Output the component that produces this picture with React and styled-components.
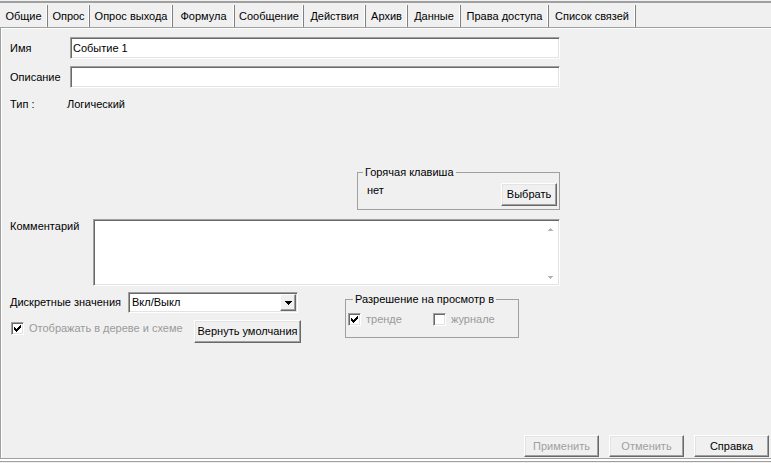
import React from 'react';
import styled, { createGlobalStyle } from 'styled-components';

const TABS = [
  { label: 'Общие', width: 48 },
  { label: 'Опрос', width: 42 },
  { label: 'Опрос выхода', width: 83 },
  { label: 'Формула', width: 62 },
  { label: 'Сообщение', width: 69 },
  { label: 'Действия', width: 62 },
  { label: 'Архив', width: 42 },
  { label: 'Данные', width: 53 },
  { label: 'Права доступа', width: 88 },
  { label: 'Список связей', width: 87 },
];

// classic 7x7 pixel check mark
function CheckMark() {
  return (
    <svg width="7" height="7" viewBox="0 0 7 7" shapeRendering="crispEdges">
      <path
        fill="#000"
        d="M6 0h1v1h-1z M5 1h2v1h-2z M0 2h1v1h-1z M4 2h3v1h-3z M0 3h2v1h-2z M3 3h3v1h-3z M0 4h5v1h-5z M1 5h3v1h-3z M2 6h1v1h-1z"
      />
    </svg>
  );
}

function DownTriangle() {
  return (
    <svg width="7" height="4" viewBox="0 0 7 4" shapeRendering="crispEdges">
      <path fill="#000" d="M0 0h7v1h-7z M1 1h5v1h-5z M2 2h3v1h-3z M3 3h1v1h-1z" />
    </svg>
  );
}

function ScrollArrow({ up }) {
  return (
    <svg width="5" height="3" viewBox="0 0 5 3" shapeRendering="crispEdges">
      <path
        fill="#b4b4b4"
        d={up ? 'M2 0h1v1h-1z M1 1h3v1h-3z M0 2h5v1h-5z' : 'M0 0h5v1h-5z M1 1h3v1h-3z M2 2h1v1h-1z'}
      />
    </svg>
  );
}

function CheckBox({ checked, label, width }) {
  return (
    <CheckItem $width={width}>
      <CheckSquare>{checked && <CheckMark />}</CheckSquare>
      <CheckLabel>{label}</CheckLabel>
    </CheckItem>
  );
}

export default function App() {
  return (
    <>
      <GlobalStyle />
      <Window>
        <TopRule />
        <TabStrip>
          {TABS.map((tab) => (
            <Tab key={tab.label} $width={tab.width}>
              {tab.label}
            </Tab>
          ))}
        </TabStrip>

        <Page>
          <FieldRow>
            <Label $width={60}>Имя</Label>
            <TextInput defaultValue="Событие 1" $width={490} />
          </FieldRow>
          <FieldRow $gap={7}>
            <Label $width={60}>Описание</Label>
            <TextInput defaultValue="" $width={490} />
          </FieldRow>
          <InfoRow>
            <Label $width={57}>Тип :</Label>
            <span>Логический</span>
          </InfoRow>

          <HotkeyGroup>
            <HotkeyLegend>Горячая клавиша</HotkeyLegend>
            <HotkeyBody>
              <HotkeyValue>нет</HotkeyValue>
              <Button $width={56} $height={23}>
                Выбрать
              </Button>
            </HotkeyBody>
          </HotkeyGroup>

          <CommentRow>
            <CommentLabel>Комментарий</CommentLabel>
            <CommentBox>
              <CommentText />
              <ScrollBar>
                <ScrollArrow up />
                <ScrollArrow />
              </ScrollBar>
            </CommentBox>
          </CommentRow>

          <LowerGrid>
            <LeftColumn>
              <ComboRow>
                <Label $width={118}>Дискретные значения</Label>
                <ComboBox>
                  <ComboValue>Вкл/Выкл</ComboValue>
                  <DropButton>
                    <DownTriangle />
                  </DropButton>
                </ComboBox>
              </ComboRow>
              <CheckRow>
                <CheckBox checked label="Отображать в дереве и схеме" />
                <Button $width={107} $height={23}>
                  Вернуть умолчания
                </Button>
              </CheckRow>
            </LeftColumn>

            <PermGroup>
              <PermLegend>Разрешение на просмотр в</PermLegend>
              <PermBody>
                <CheckBox checked label="тренде" width={85} />
                <CheckBox label="журнале" />
              </PermBody>
            </PermGroup>
          </LowerGrid>

          <Footer>
            <Button $width={75} $height={22} disabled>
              Применить
            </Button>
            <Button $width={75} $height={22} disabled>
              Отменить
            </Button>
            <Button $width={75} $height={22}>
              Справка
            </Button>
          </Footer>
        </Page>

        <BottomEdge />
      </Window>
    </>
  );
}

const GlobalStyle = createGlobalStyle`
  html, body {
    margin: 0;
    padding: 0;
    background: #f0f0f0;
  }
  body {
    font-family: 'Liberation Sans', Arial, sans-serif;
    font-size: 11px;
  }
`;

const Window = styled.div`
  width: 771px;
  height: 463px;
  display: flex;
  flex-direction: column;
  background: #f0f0f0;
  color: #000;
  font: 11px/13px 'Liberation Sans', Arial, sans-serif;
  overflow: hidden;
`;

const TopRule = styled.div`
  flex: none;
  height: 2px;
  margin-top: 1px;
  background: #a0a0a0;
`;

const TabStrip = styled.div`
  flex: none;
  display: flex;
  height: 24px;
  padding-top: 2px;
  box-sizing: border-box;
`;

const Tab = styled.div`
  box-sizing: border-box;
  width: ${(p) => p.$width}px;
  display: flex;
  align-items: center;
  justify-content: center;
  white-space: nowrap;
  border-right: 1px solid #808080;
  box-shadow: inset -1px 0 0 #fff;
`;

const Page = styled.div`
  flex: 1;
  min-height: 0;
  display: flex;
  flex-direction: column;
  border-top: 1px solid #a0a0a0;
  border-left: 1px solid #a0a0a0;
  border-bottom: 1px solid #a0a0a0;
  box-shadow: inset 1px 1px 0 #fff;
  padding: 9px 2px 1px 9px;
`;

const BottomEdge = styled.div`
  flex: none;
  height: 4px;
  box-sizing: border-box;
  border-top: 2px solid #fff;
  border-bottom: 1px solid #f0f0f0;
  background: #a0a0a0;
`;

const FieldRow = styled.div`
  display: flex;
  align-items: center;
  height: 22px;
  margin-top: ${(p) => p.$gap || 0}px;
`;

const Label = styled.span`
  flex: none;
  width: ${(p) => p.$width}px;
  white-space: nowrap;
`;

const sunken = `
  box-sizing: border-box;
  background: #fff;
  border: 1px solid;
  border-color: #a0a0a0 #fff #fff #a0a0a0;
  box-shadow: inset 1px 1px 0 #696969, inset -1px -1px 0 #e3e3e3;
`;

const TextInput = styled.input`
  ${sunken}
  width: ${(p) => p.$width}px;
  height: 22px;
  padding: 0 2px;
  margin: 0;
  font: inherit;
  color: #000;
  outline: none;
`;

const InfoRow = styled.div`
  display: flex;
  height: 13px;
  margin-top: 10px;
`;

const groupBox = `
  box-sizing: border-box;
  margin: 0;
  border: 1px solid #a0a0a0;
  min-width: 0;
`;

const HotkeyGroup = styled.fieldset`
  ${groupBox}
  align-self: flex-start;
  width: 203px;
  margin: 55px 0 0 347px;
  padding: 4px 2px 3px 9px;
`;

const HotkeyLegend = styled.legend`
  padding: 0 2px;
  margin-left: -4px;
  line-height: 13px;
`;

const HotkeyBody = styled.div`
  display: flex;
  align-items: flex-start;
  justify-content: space-between;
`;

const HotkeyValue = styled.span`
  padding-top: 1px;
`;

const Button = styled.button`
  flex: none;
  box-sizing: border-box;
  width: ${(p) => p.$width}px;
  height: ${(p) => p.$height}px;
  padding: 0;
  margin: 0;
  font: inherit;
  color: #000;
  background: #f0f0f0;
  border: 1px solid;
  border-color: #fff #696969 #696969 #fff;
  box-shadow: inset -1px -1px 0 #a0a0a0, inset 1px 1px 0 #e3e3e3;
  white-space: nowrap;

  &:disabled {
    color: #a0a0a0;
  }
`;

const CommentRow = styled.div`
  display: flex;
  align-items: flex-start;
  margin-top: 9px;
`;

const CommentLabel = styled.span`
  flex: none;
  width: 83px;
  padding-top: 1px;
`;

const CommentBox = styled.div`
  ${sunken}
  display: flex;
  width: 467px;
  height: 67px;
  padding: 1px;
`;

const CommentText = styled.div`
  flex: 1;
`;

const ScrollBar = styled.div`
  flex: none;
  width: 16px;
  display: flex;
  flex-direction: column;
  align-items: center;
  justify-content: space-between;
  padding: 7px 0 5px;
  box-sizing: border-box;
`;

const LowerGrid = styled.div`
  display: grid;
  grid-template-columns: 335px 174px;
  align-items: start;
  margin-top: 6px;
`;

const LeftColumn = styled.div`
  display: flex;
  flex-direction: column;
  gap: 7px;
`;

const ComboRow = styled.div`
  display: flex;
  align-items: center;
  height: 21px;
`;

const ComboBox = styled.div`
  ${sunken}
  display: flex;
  align-items: center;
  width: 170px;
  height: 21px;
  padding: 1px;
`;

const ComboValue = styled.span`
  flex: 1;
  padding-left: 2px;
`;

const DropButton = styled.span`
  flex: none;
  box-sizing: border-box;
  width: 16px;
  height: 17px;
  display: flex;
  align-items: center;
  justify-content: center;
  background: #f0f0f0;
  border: 1px solid;
  border-color: #fff #696969 #696969 #fff;
  box-shadow: inset -1px -1px 0 #a0a0a0;
`;

const CheckRow = styled.div`
  display: grid;
  grid-template-columns: 184px auto;
  align-items: start;
`;

const CheckItem = styled.label`
  display: flex;
  align-items: center;
  gap: 5px;
  margin-top: 2px;
  padding-left: 1px;
  width: ${(p) => (p.$width ? `${p.$width}px` : 'auto')};
  box-sizing: border-box;
`;

const CheckSquare = styled.span`
  ${sunken}
  flex: none;
  width: 13px;
  height: 13px;
  display: flex;
  align-items: center;
  justify-content: center;
`;

const CheckLabel = styled.span`
  color: #9a9a9a;
  white-space: nowrap;
`;

const PermGroup = styled.fieldset`
  ${groupBox}
  width: 174px;
  margin-top: 1px;
  padding: 5px 2px 11px 1px;
`;

const PermLegend = styled.legend`
  padding: 0 2px;
  margin-left: 6px;
  line-height: 13px;
`;

const PermBody = styled.div`
  display: flex;
  align-items: center;
`;

const Footer = styled.div`
  display: flex;
  justify-content: flex-end;
  gap: 10px;
  margin-top: auto;
`;
